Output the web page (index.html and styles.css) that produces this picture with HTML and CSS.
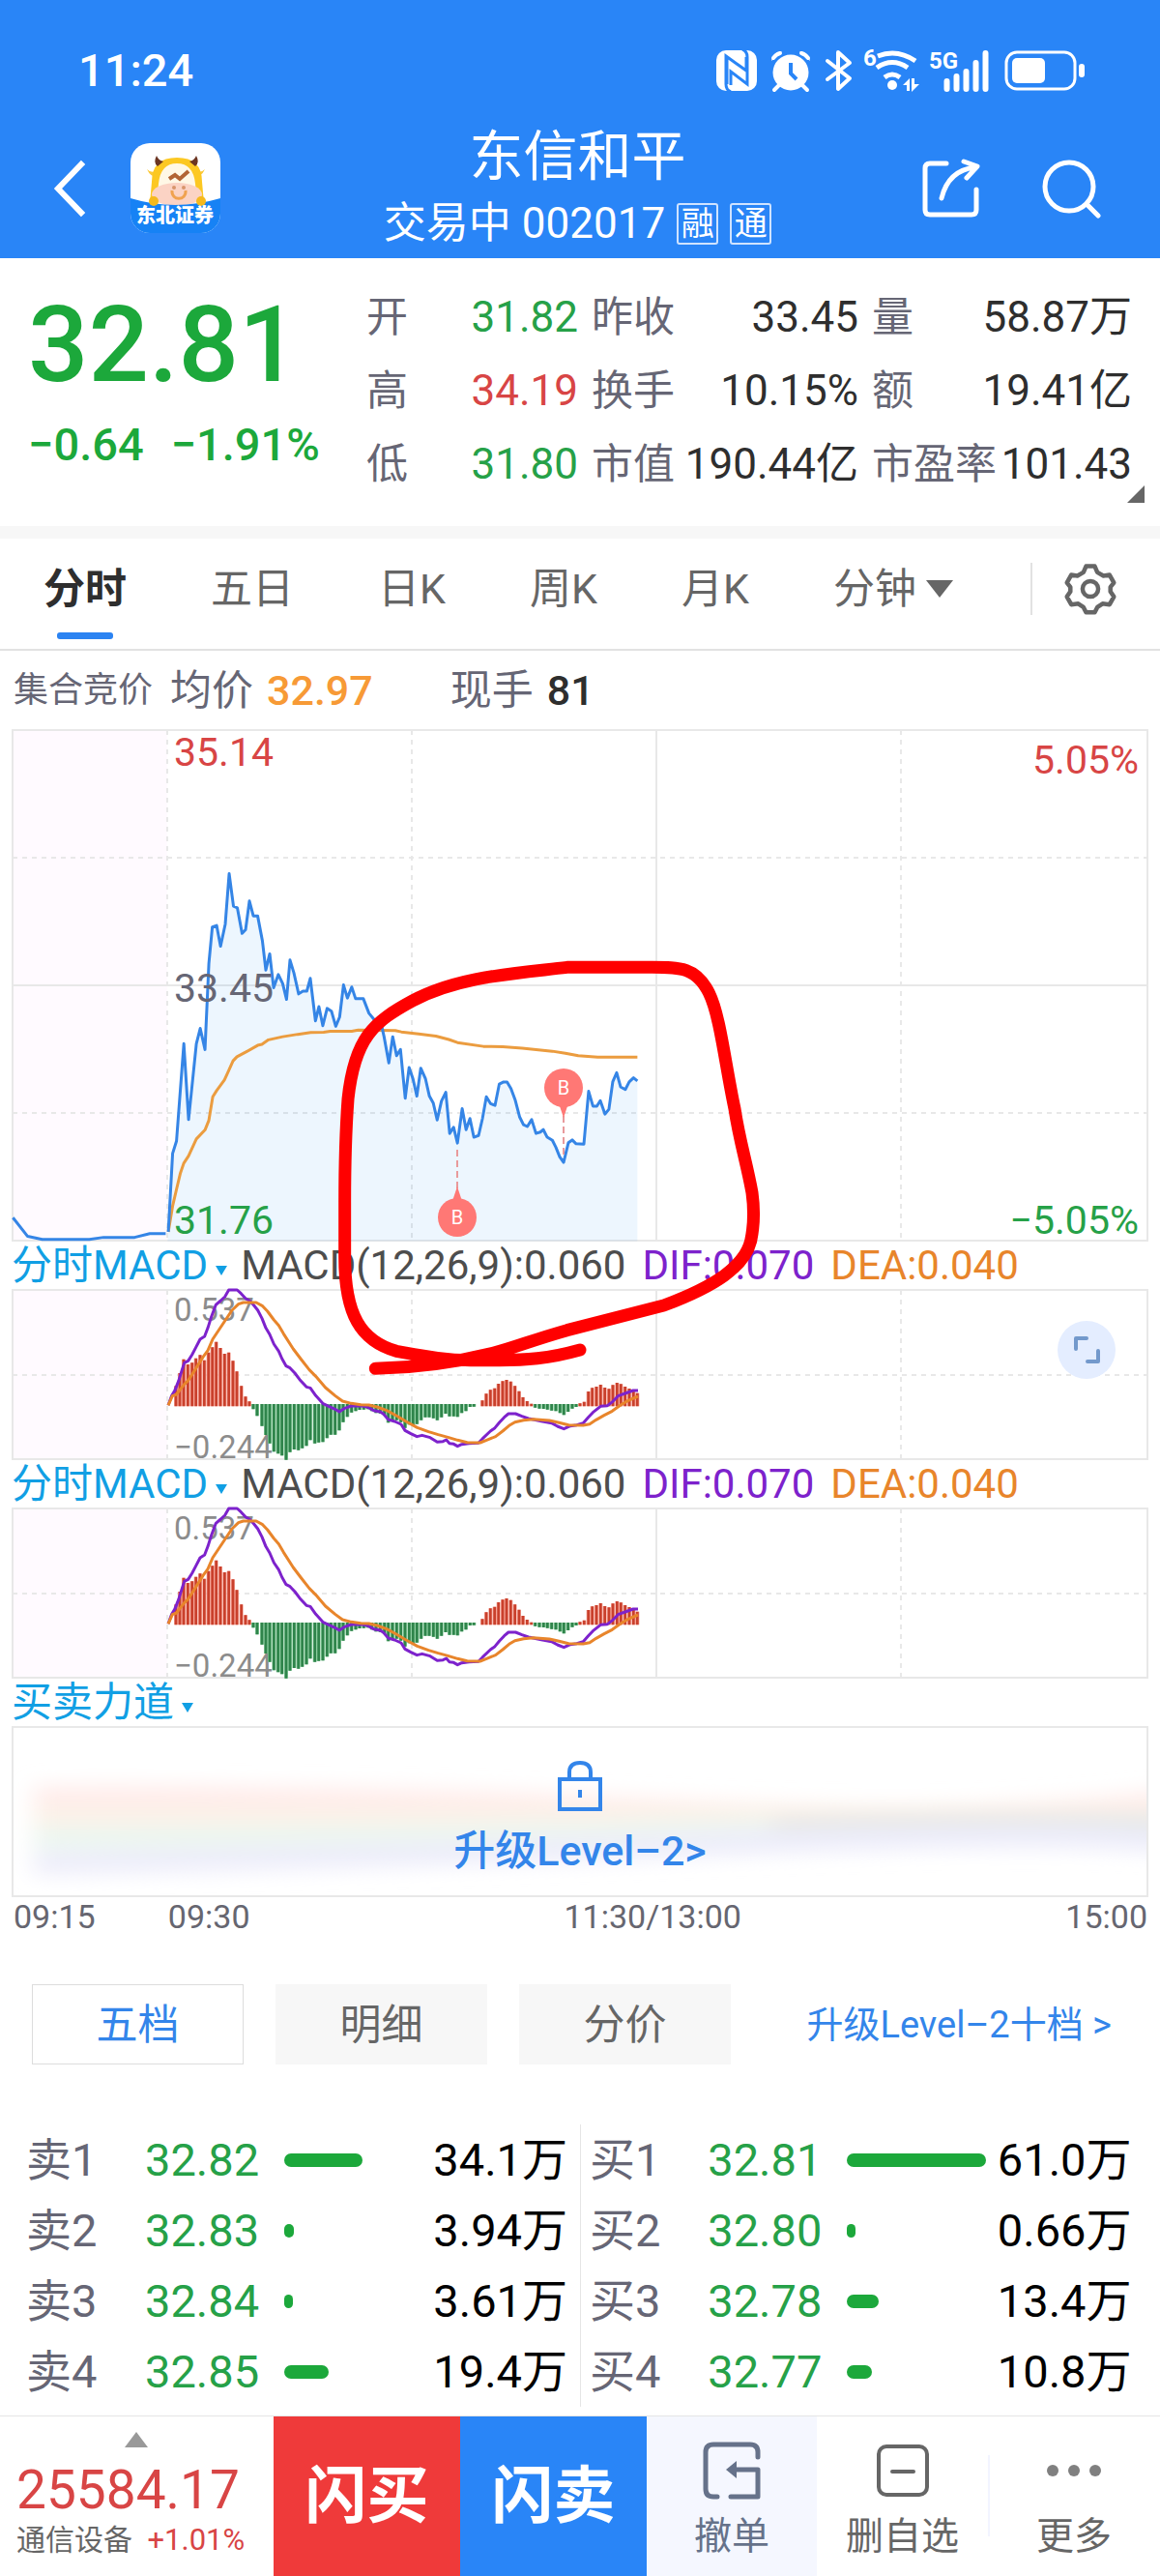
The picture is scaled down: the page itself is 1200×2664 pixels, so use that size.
FILE: index.html
```html
<!DOCTYPE html>
<html lang="zh-CN">
<head>
<meta charset="utf-8">
<meta name="viewport" content="width=device-width, initial-scale=1">
<title>东信和平 002017</title>
<link rel="stylesheet" href="styles.css">
</head>
<body>
<header class="top">
  <div class="status">
    <span>11:24</span>
    <svg class="status-icons" viewBox="0 0 384 46" aria-hidden="true">
      <rect x="0" y="2" width="42" height="42" rx="10" fill="#fff"/>
      <path d="M15 45Q10 43 10 37V8l21 15V9M11 37V10M27 1q5 2 5 8v28L15 24v14" fill="none" stroke="#2985f7" stroke-width="3"/>
      <g fill="#fff">
        <circle cx="77" cy="25" r="18.500"/>
        <path d="M57 13q1-9 11-10zM97 13q-1-9-11-10z"/>
        <path d="M65 38l-5 5M89 38l5 5M59 10q3-4 7-5M95 10q-3-4-7-5" stroke="#fff" stroke-width="4" stroke-linecap="round"/>
      </g>
      <path d="M77 15v11l6 6" fill="none" stroke="#2985f7" stroke-width="4"/>
      <path d="M115 13l23 18-12 11V4l12 11-23 17" fill="none" stroke="#fff" stroke-width="4" stroke-linejoin="round" stroke-linecap="round"/>
      <text x="152" y="18" class="mini">6</text>
      <g fill="none" stroke="#fff" stroke-width="5">
        <path d="M167 8q20-8 39 5M166 20q16-11 32 0M174 30q8-6 16 0"/>
      </g>
      <circle cx="182" cy="38" r="5" fill="#fff"/>
      <path d="M193 38l7-7v13h-3v-6zM202 31h3v6h5l-8 8z" fill="#fff"/>
      <text x="220" y="21" class="mini">5G</text>
      <path d="M238.500 34v8M248.500 29v13M258.500 24v18M268.500 15v27M278.500 5v37" stroke="#fff" stroke-width="6" stroke-linecap="round"/>
      <rect x="300" y="4" width="71" height="38" rx="11" fill="none" stroke="#fff" stroke-width="3"/>
      <rect x="306" y="10" width="34" height="26" rx="5" fill="#fff"/>
      <rect x="375" y="16" width="6" height="14" rx="3" fill="#fff"/>
    </svg>
  </div>
  <div class="nav">
    <div class="nav-side">
      <button class="icon-btn back" aria-label="返回"><svg viewBox="0 0 36 60"><path d="M30 5L6 30l24 25" fill="none" stroke="#fff" stroke-width="6" stroke-linecap="square"/></svg></button>
      <svg class="logo" viewBox="0 0 93 93" role="img" aria-label="东北证券">
        <defs><clipPath id="logo-clip"><rect width="93" height="93" rx="20"/></clipPath></defs>
        <g clip-path="url(#logo-clip)">
          <rect width="93" height="93" fill="#fff"/>
          <path d="M17 27q5 5 11 1l1 7q-8 1-12-8zM77 27q-5 5-11 1l-1 7q8 1 12-8z" fill="#fbc93a"/>
          <path d="M22 40q0-25 26-25t26 25l2 22H20z" fill="#fcc822"/>
          <path d="M27 13q-4 7 1 11l6-5q-5-1-7-6zM68 13q4 7-1 11l-6-5q5-1 7-6z" fill="#6b3522"/>
          <path d="M29 42q2-21 19-21t19 21l2 20H27z" fill="#fff8e6"/>
          <ellipse cx="48" cy="53" rx="26" ry="12" fill="#fbd3c4"/>
          <path d="M40 37l6-4 5 4 9-8" fill="none" stroke="#b26434" stroke-width="4"/>
          <circle cx="45" cy="46" r="2" fill="#d9956b"/><circle cx="55" cy="46" r="2" fill="#d9956b"/>
          <path d="M43 49c-1 11 15 11 14 0" fill="none" stroke="#f0a24f" stroke-width="3"/>
          <path d="M0 57q46 14 93 0v36H0z" fill="#1682f5"/>
          <circle cx="24" cy="60" r="5" fill="#f5b91e"/><circle cx="73" cy="60" r="5" fill="#f5b91e"/>
          <text x="46" y="82" text-anchor="middle" class="logo-text">东北证券</text>
        </g>
      </svg>
    </div>
    <div class="nav-title">
      <h1>东信和平</h1>
      <p>交易中 002017<span class="tag">融</span><span class="tag">通</span></p>
    </div>
    <div class="nav-side nav-right">
      <button class="icon-btn share" aria-label="分享"><svg viewBox="0 0 62 62"><g fill="none" stroke="#fff" stroke-width="5" stroke-linecap="round" stroke-linejoin="round"><path d="M26 5H9q-5 0-5 5v43q0 5 5 5h43q5 0 5-5V32"/><path d="M21 41Q28 12 56 9M44 3l14 5-11 12"/></g></svg></button>
      <button class="icon-btn search" aria-label="搜索"><svg viewBox="0 0 64 62"><g fill="none" stroke="#fff" stroke-width="5" stroke-linecap="round"><circle cx="29" cy="29" r="25"/><path d="M47 47l12 12"/></g></svg></button>
    </div>
  </div>
</header>

<main>
  <section class="quote">
    <div class="quote-price">
      <strong>32.81</strong>
      <p><span>−0.64</span><span>−1.91%</span></p>
    </div>
    <dl class="stats">
      <div><dt>开</dt><dd class="down">31.82</dd></div>
      <div><dt>昨收</dt><dd>33.45</dd></div>
      <div><dt>量</dt><dd>58.87万</dd></div>
      <div><dt>高</dt><dd class="up">34.19</dd></div>
      <div><dt>换手</dt><dd>10.15%</dd></div>
      <div><dt>额</dt><dd>19.41亿</dd></div>
      <div><dt>低</dt><dd class="down">31.80</dd></div>
      <div><dt>市值</dt><dd>190.44亿</dd></div>
      <div><dt>市盈率</dt><dd>101.43</dd></div>
    </dl>
    <svg class="corner" viewBox="0 0 18 18" aria-hidden="true"><path d="M18 0v18H0z" fill="#666"/></svg>
  </section>

  <nav class="periods">
    <button class="active">分时</button>
    <button>五日</button>
    <button>日K</button>
    <button>周K</button>
    <button>月K</button>
    <button class="more-periods">分钟<svg viewBox="0 0 28 18" aria-hidden="true"><path d="M0 0h28L14 18z" fill="#666"/></svg></button>
    <button class="settings" aria-label="设置"><svg viewBox="0 0 60 60"><g fill="none" stroke="#666" stroke-width="5" stroke-linejoin="round"><path d="M25 4h10l3 7 7 4 7-1 5 9-4 5v5l4 6-5 9-8-1-6 4-3 6H25l-3-6-6-4-8 1-5-9 4-6v-5l-4-5 5-9 7 1 7-4z"/><circle cx="30" cy="30" r="9"/></g></svg></button>
  </nav>

  <section class="charts">
    <div class="legend"><small>集合竞价</small><span class="avg-label">均价</span><b class="avg">32.97</b><span class="last-label">现手</span><b>81</b></div>

    <svg class="panel" viewBox="0 0 1200 530" role="img" aria-label="分时走势">
      <rect x="13" y="1" width="160" height="528" fill="#fffaff"/>
      <g class="frame"><rect x="13" y="1" width="1174" height="528"/></g>
      <g class="grid">
        <path d="M13 265h1174M679 1v528" class="solid"/>
        <path d="M13 133h1174M13 397h1174M173 1v528M426 1v528M932 1v528"/>
      </g>
      <g transform="translate(0 -14) scale(.44643 .35714)">
        <path class="area" d="M388 1522L390 1495 400 1268 409 1232 426 950 437 1170 455 950 464 906 475 967 484 718 492 612 502 608 511 668 522 604 531 458 541 552 550 557 561 631 569 620 578 537 587 580 597 580 608 652 616 737 625 690 634 788 645 750 655 776 664 822 672 708 681 745 692 806 702 798 711 798 719 761 731 884 739 843 748 898 758 848 768 856 778 900 787 873 796 780 805 818 815 786 824 820 842 820 855 862 870 885 880 874 890 930 901 1006 910 930 919 985 928 967 939 1108 948 1019 957 1052 966 1102 975 1021 986 1052 995 1102 1004 1122 1013 1171 1023 1116 1033 1091 1042 1210 1051 1192 1060 1238 1071 1138 1080 1199 1089 1167 1098 1221 1109 1216 1118 1167 1127 1104 1137 1124 1147 1129 1157 1067 1167 1061 1175 1061 1184 1080 1194 1114 1204 1162 1213 1185 1222 1190 1232 1170 1242 1210 1252 1206 1259 1199 1268 1221 1280 1230 1288 1250 1297 1278 1306 1294 1317 1237 1326 1229 1335 1240 1353 1241 1364 1088 1374 1131 1383 1131 1391 1115 1402 1154 1411 1140 1420 1060 1429 1034 1438 1075 1449 1083 1458 1061 1468 1049 1477 1058V1522z"/>
        <path class="line avg-line" d="M390 1495L400 1420 409 1372 418 1325 426 1296 437 1275 455 1226 475 1200 484 1172 493 1104 502 1086 520 1055 530 1028 540 1000 549 988 570 974 597 955 607 952 622 939 655 930 690 923 720 918 750 917 765 914 815 914 830 911 916 912 930 916 970 922 1010 928 1040 938 1060 947 1120 958 1165 959 1210 963 1280 972 1310 978 1340 985 1385 989H1477"/>
        <path class="line price-line" d="M30 1454L64 1508 98 1517H207L240 1511H312L347 1500H384"/>
        <path class="line price-line" d="M390 1495L400 1268 409 1232 426 950 437 1170 455 950 464 906 475 967 484 718 492 612 502 608 511 668 522 604 531 458 541 552 550 557 561 631 569 620 578 537 587 580 597 580 608 652 616 737 625 690 634 788 645 750 655 776 664 822 672 708 681 745 692 806 702 798 711 798 719 761 731 884 739 843 748 898 758 848 768 856 778 900 787 873 796 780 805 818 815 786 824 820 842 820 855 862 870 885 880 874 890 930 901 1006 910 930 919 985 928 967 939 1108 948 1019 957 1052 966 1102 975 1021 986 1052 995 1102 1004 1122 1013 1171 1023 1116 1033 1091 1042 1210 1051 1192 1060 1238 1071 1138 1080 1199 1089 1167 1098 1221 1109 1216 1118 1167 1127 1104 1137 1124 1147 1129 1157 1067 1167 1061 1175 1061 1184 1080 1194 1114 1204 1162 1213 1185 1222 1190 1232 1170 1242 1210 1252 1206 1259 1199 1268 1221 1280 1230 1288 1250 1297 1278 1306 1294 1317 1237 1326 1229 1335 1240 1353 1241 1364 1088 1374 1131 1383 1131 1391 1115 1402 1154 1411 1140 1420 1060 1429 1034 1438 1075 1449 1083 1458 1061 1468 1049 1477 1058"/>
      </g>
      <g class="marker">
        <path class="stem" d="M473 435v40M583 440v-42"/>
        <path d="M473 473l5 15h-10zM583 402l5-15h-10z"/>
        <circle cx="473" cy="505" r="20"/><circle cx="583" cy="371" r="20"/>
        <text x="473" y="512">B</text><text x="583" y="378">B</text>
      </g>
      <g class="scale">
        <text x="180" y="38" class="up">35.14</text>
        <text x="180" y="282">33.45</text>
        <text x="180" y="522" class="down">31.76</text>
        <text x="1178" y="46" class="up end">5.05%</text>
        <text x="1178" y="522" class="down end">−5.05%</text>
      </g>
    </svg>

    <div class="legend indicator"><button>分时MACD<i></i></button><span>MACD(12,26,9):0.060</span><span class="dif">DIF:0.070</span><span class="dea">DEA:0.040</span></div>
    <div class="panel-wrap">
      <svg class="panel" viewBox="0 0 1200 177" role="img" aria-label="MACD">
        <defs>
          <path id="bars-up" d="M66 403V340M78 403V300M90 403V257M103 403V273M116 403V268M128 403V254M141 403V244M154 403V260M167 403V236M179 403V220M191 403V203M204 403V222M217 403V240M230 403V236M243 403V262M255 403V295M269 403V340M282 403V373M294 403V388M1017 403V385M1029 403V364M1042 403V352M1055 403V347M1067 403V333M1080 403V325M1092 403V321M1105 403V326M1118 403V340M1131 403V356M1143 403V375M1156 403V387M1169 403V395M1320 403V394M1333 403V389M1346 403V357M1358 403V346M1371 403V342M1384 403V336M1397 403V345M1410 403V349M1422 403V337M1435 403V330M1447 403V334M1460 403V342M1473 403V348M1486 403V354M1498 403V362"/>
          <path id="bars-down" d="M306 396V412M318 396V433M333 396V464M345 396V492M357 396V518M370 396V544M383 396V550M395 396V556M408 396V569M420 396V545M433 396V537M446 396V539M458 396V533M471 396V526M483 396V508M497 396V518M509 396V515M522 396V514M535 396V502M547 396V491M560 396V491M573 396V478M585 396V452M598 396V436M611 396V422M624 396V418M636 396V414M649 396V413M662 396V412M674 396V418M687 396V424M700 396V425M713 396V430M725 396V454M738 396V448M751 396V446M764 396V452M777 396V470M790 396V460M802 396V462M814 396V458M827 396V446M840 396V437M852 396V437M865 396V440M877 396V446M890 396V437M903 396V426M915 396V434M928 396V434M940 396V436M953 396V424M966 396V418M979 396V405M991 396V404M1181 396V407M1194 396V410M1207 396V411M1219 396V413M1232 396V416M1245 396V418M1258 396V424M1270 396V430M1283 396V420M1296 396V410M1308 396V405"/>
          <g id="macd-grid">
            <rect x="13" y="1" width="160" height="175" fill="#fffaff"/>
            <g class="frame"><rect x="13" y="1" width="1174" height="175"/></g>
            <g class="grid"><path d="M679 1v175" class="solid"/><path d="M13 89h1174M173 1v175M426 1v175M932 1v175"/></g>
          </g>
          <g id="macd-plot" transform="translate(160 -13) scale(.33333)" fill="none">
            <use href="#bars-up" stroke="#f6a497" stroke-width="12"/>
            <use href="#bars-up" stroke="#c9402c" stroke-width="8"/>
            <use href="#bars-down" stroke="#8bcc9e" stroke-width="12"/>
            <use href="#bars-down" stroke="#2f844b" stroke-width="8"/>
            <path stroke="#7d22cc" stroke-width="9" stroke-linejoin="round" d="M42 400L53 370 62 355 74 325 85 290 92 268 104 262 116 243 128 220 141 195 155 186 165 160 176 125 190 88 205 75 218 63 230 42H256L268 53 282 68 295 76 308 90 320 105 333 130 345 160 357 180 370 210 385 232 395 255 408 278 420 284 435 300 450 320 471 343 483 346 500 370 523 395 540 403 560 412 573 420 590 409 610 402 640 401 660 405 680 416 700 420 710 427 725 444 745 450 765 459 777 478 795 488 814 497 830 493 855 500 877 514 895 512 905 507 915 518 928 520 940 527 953 521 975 518 1005 517 1018 503 1042 480 1056 470 1070 453 1085 437 1098 426 1120 426 1140 434 1160 441 1200 449 1232 455 1250 465 1270 473 1290 464 1310 461 1330 455 1345 438 1360 422 1384 403 1405 401 1422 388 1438 371 1460 363 1485 354 1500 354"/>
            <path stroke="#e8852b" stroke-width="9" stroke-linejoin="round" d="M42 400L55 371 68 366 80 350 92 335 104 323 120 298 150 250 165 230 180 195 200 165 220 135 240 105 260 86 275 81H315L335 92 350 108 370 135 385 152 400 178 430 225 455 258 480 290 500 310 530 345 560 370 583 387 610 394 640 398 665 399 690 405 720 416 750 432 780 450 815 469 850 482 880 491 910 499 940 508 970 515 1010 516 1030 508 1058 497 1080 480 1100 463 1118 452 1145 446 1175 443 1225 447 1255 454 1285 461 1330 462 1350 458 1370 445 1395 431 1420 418 1445 400 1470 385 1500 372"/>
          </g>
        </defs>
        <use href="#macd-grid"/>
        <g class="scale small"><text x="180" y="33">0.537</text><text x="180" y="175">−0.244</text></g>
        <use href="#macd-plot"/>
      </svg>
      <button class="expand" aria-label="全屏"><svg viewBox="0 0 60 60"><path d="M19 29V18h11M31 42h11V31" fill="none" stroke="#7399cc" stroke-width="4" stroke-linecap="round" stroke-linejoin="round"/></svg></button>
    </div>

    <div class="legend indicator"><button>分时MACD<i></i></button><span>MACD(12,26,9):0.060</span><span class="dif">DIF:0.070</span><span class="dea">DEA:0.040</span></div>
    <svg class="panel" viewBox="0 0 1200 177" role="img" aria-label="MACD">
      <use href="#macd-grid"/>
      <g class="scale small"><text x="180" y="33">0.537</text><text x="180" y="175">−0.244</text></g>
      <use href="#macd-plot"/>
    </svg>

    <div class="legend indicator"><button>买卖力道<i></i></button></div>
    <div class="panel-wrap">
      <svg class="panel" viewBox="0 0 1200 177" aria-hidden="true">
        <defs>
          <filter id="haze" x="-10%" y="-60%" width="120%" height="220%"><feGaussianBlur stdDeviation="12 10"/></filter>
          <clipPath id="haze-clip"><rect x="14" y="2" width="1172" height="173"/></clipPath>
        </defs>
        <g clip-path="url(#haze-clip)"><g filter="url(#haze)" fill="none" stroke-width="24">
          <path d="M35 74Q400 72 700 88T1210 78" stroke="#ffecea"/>
          <path d="M35 95Q400 96 750 96T1210 96" stroke="#fbf2e8"/>
          <path d="M35 116Q400 116 750 108T1210 104" stroke="#ecf6f0"/>
          <path d="M800 108Q1000 100 1210 106" stroke="#e2e5e4"/>
          <path d="M35 142Q400 136 750 122T1210 120" stroke="#ededfa"/>
        </g></g>
        <g class="frame"><rect x="13" y="1" width="1174" height="175"/></g>
      </svg>
      <a class="upgrade" href="#level2">
        <svg viewBox="0 0 48 54" aria-hidden="true"><g fill="none" stroke="#3385ea" stroke-width="4"><rect x="3" y="20" width="42" height="31"/><path d="M13 20v-7q0-10 11-10t11 10v7M24 31v8"/></g></svg>
        升级Level–2&gt;
      </a>
    </div>
    <div class="axis"><span>09:15</span><span>09:30</span><span>11:30/13:00</span><span>15:00</span></div>

    <svg class="scribble" viewBox="0 0 1200 760" aria-hidden="true">
      <path transform="translate(340 287) scale(.33333)" d="M780 1308C680 1336 610 1340 530 1340H440C360 1340 300 1328 210 1312C100 1280 50 1200 50 1020V850C50 750 52 640 60 530C80 340 140 290 260 225C400 150 570 141 740 121H1000C1090 121 1140 120 1180 200C1215 270 1230 420 1260 560C1275 660 1298 730 1314 820Q1325 900 1310 970C1290 1050 1200 1110 1040 1170L740 1247C630 1278 580 1300 510 1318C400 1345 280 1364 145 1366"/>
    </svg>
  </section>

  <nav class="book-tabs">
    <button class="active">五档</button>
    <button>明细</button>
    <button>分价</button>
    <a href="#level2">升级Level–2十档 &gt;</a>
  </nav>

  <section class="book">
    <table>
      <tr><th>卖1</th><td class="down">32.82</td><td><i style="width:56%"></i></td><td>34.1万</td></tr>
      <tr><th>卖2</th><td class="down">32.83</td><td><i style="width:7%"></i></td><td>3.94万</td></tr>
      <tr><th>卖3</th><td class="down">32.84</td><td><i style="width:6%"></i></td><td>3.61万</td></tr>
      <tr><th>卖4</th><td class="down">32.85</td><td><i style="width:32%"></i></td><td>19.4万</td></tr>
    </table>
    <table>
      <tr><th>买1</th><td class="down">32.81</td><td><i style="width:100%"></i></td><td>61.0万</td></tr>
      <tr><th>买2</th><td class="down">32.80</td><td><i style="width:6%"></i></td><td>0.66万</td></tr>
      <tr><th>买3</th><td class="down">32.78</td><td><i style="width:23%"></i></td><td>13.4万</td></tr>
      <tr><th>买4</th><td class="down">32.77</td><td><i style="width:18%"></i></td><td>10.8万</td></tr>
    </table>
  </section>
</main>

<footer class="actions">
  <div class="sector">
    <svg viewBox="0 0 24 16" aria-hidden="true"><path d="M12 0l12 16H0z" fill="#999"/></svg>
    <strong>25584.17</strong>
    <p>通信设备 <span>+1.01%</span></p>
  </div>
  <button class="trade buy">闪买</button>
  <button class="trade sell">闪卖</button>
  <button class="tool cancel">
    <svg viewBox="0 0 60 60"><g fill="none" stroke="#66728a" stroke-width="5" stroke-linecap="round" stroke-linejoin="round"><path d="M57 16v-5q0-8-8-8H11q-8 0-8 8v38q0 8 8 8h4"/><path d="M33 29h24v28H29"/></g><path d="M24 29l11-9v18z" fill="#66728a"/></svg>
    撤单</button>
  <button class="tool">
    <svg viewBox="0 0 60 60"><g fill="none" stroke="#666" stroke-width="4" stroke-linecap="round"><rect x="5" y="5" width="50" height="50" rx="8"/><path d="M19 31h22"/></g></svg>
    删自选</button>
  <button class="tool last">
    <svg viewBox="0 0 60 60"><g fill="#808080"><circle cx="8" cy="30" r="6"/><circle cx="30" cy="30" r="6"/><circle cx="52" cy="30" r="6"/></g></svg>
    更多</button>
</footer>
</body>
</html>
```
FILE: styles.css
```css
* { box-sizing: border-box; }

body {
  margin: 0;
  background: #fff;
  color: #2e2e2e;
  font: 43px/56px Roboto, "Noto Sans CJK SC", sans-serif;
}

h1, p, dl, dd { margin: 0; }
button { margin: 0; padding: 0; border: 0; background: none; color: inherit; font: inherit; }
a { text-decoration: none; }
svg { display: block; }
.up { color: #d84545; fill: #d84545; }
.down { color: #26a148; fill: #26a148; }

/* header */
.top { background: #2985f7; color: #fff; }
.status {
  display: flex;
  justify-content: space-between;
  align-items: center;
  padding: 45px 75px 0 81px;
  font-size: 47px;
  font-weight: 500;
  line-height: 55px;
}
.status-icons { width: 384px; height: 46px; overflow: visible; }
.mini { fill: #fff; font-size: 24px; font-weight: 700; }
.nav {
  display: grid;
  grid-template-columns: 1fr auto 1fr;
  align-items: center;
  padding: 30px 59px 8px 54px;
}
.nav-side { display: flex; align-items: center; gap: 45px; }
.nav-right { justify-content: flex-end; gap: 62px; }
.icon-btn svg { height: 62px; }
.back svg { height: 60px; }
.logo { width: 93px; height: 93px; }
.logo-text { font-size: 20px; font-weight: 900; fill: #fff; }
.nav-title { text-align: center; }
.nav-title h1 { font-size: 56px; font-weight: 400; line-height: 64px; }
.nav-title p { display: flex; align-items: center; justify-content: center; gap: 12px; margin-top: 9px; font-size: 44px; }
.tag {
  width: 43px;
  border: 2px solid #cfe3ff;
  border-radius: 3px;
  font-size: 34px;
  line-height: 39px;
}

/* quote */
.quote { position: relative; display: flex; padding: 23px 29px 26px; }
.quote-price { flex: 0 0 350px; padding-top: 12px; color: #1ca83b; }
.quote-price strong { display: block; font-size: 110px; font-weight: 500; line-height: 110px; }
.quote-price p { display: flex; gap: 28px; margin-top: 20px; font-size: 47px; font-weight: 500; }
.stats { flex: 1; display: grid; grid-template-columns: 219fr 276fr 269fr; column-gap: 14px; }
.stats div { display: flex; justify-content: space-between; line-height: 76px; white-space: nowrap; }
.stats dt { color: #666675; }
.stats dd { font-size: 44px; }
.corner { position: absolute; right: 16px; bottom: 24px; width: 18px; }

/* period tabs */
.periods {
  display: flex;
  align-items: flex-start;
  height: 129px;
  padding: 0 42px 0 45px;
  border-top: 13px solid #f7f7f7;
  border-bottom: 2px solid #e2e2e2;
  color: #666;
}
.periods button { margin-right: 87px; white-space: nowrap; line-height: 104px; }
.periods .active { position: relative; color: #2e2e2e; font-weight: 700; }
.periods .active::after {
  content: "";
  position: absolute;
  left: 14px;
  right: 14px;
  bottom: 0;
  height: 7px;
  border-radius: 3px;
  background: #2b83f2;
}
.periods .more-periods { display: flex; align-items: center; gap: 10px; margin-right: 0; }
.more-periods svg { width: 28px; }
.periods .settings { margin: 25px 0 0 auto; padding-left: 30px; border-left: 2px solid #e2e2e2; }
.settings svg { width: 60px; height: 54px; }

/* charts */
.charts { position: relative; }
.legend { display: flex; align-items: center; height: 81px; padding: 0 14px; color: #666675; white-space: nowrap; }
.legend small { font-size: 36px; }
.legend b { color: #2e2e2e; font-weight: 500; }
.legend .avg { color: #f79a36; }
.avg-label { margin: 0 14px 0 18px; }
.last-label { margin: 0 14px 0 80px; }
.indicator { height: 49px; gap: 17px; padding-left: 12px; font-size: 42px; line-height: 49px; color: #4d4d4d; }
.indicator button { display: flex; align-items: center; gap: 8px; margin-right: -3px; color: #119fe4; }
.indicator i { margin-top: 10px; border: 6px solid transparent; border-top: 10px solid #119fe4; border-bottom: 0; }
.dif { color: #7d22cc; }
.dea { color: #e8852b; }
.panel { width: 100%; height: auto; overflow: visible; }
.panel-wrap { position: relative; }
.frame { fill: none; stroke: #e8e8e8; stroke-width: 2; }
.grid { fill: none; stroke: #e8e8e8; stroke-width: 2; stroke-dasharray: 5 5; }
.grid .solid { stroke-dasharray: none; }
.area { fill: #1e88f5; fill-opacity: .08; }
.line { fill: none; stroke-width: 3; stroke-linejoin: round; vector-effect: non-scaling-stroke; }
.price-line { stroke: #3585e6; }
.avg-line { stroke: #eb9c3f; }
.marker { fill: #ff7875; }
.marker text { fill: #fff; font-size: 20px; text-anchor: middle; }
.marker .stem { stroke: #e89a9c; stroke-width: 2; stroke-dasharray: 7 4; }
.scale { fill: #666675; font-size: 41px; }
.scale.small { fill: #8c8c8c; font-size: 33px; }
.scale .end { text-anchor: end; }
.expand { position: absolute; top: 33px; right: 46px; width: 60px; height: 60px; border-radius: 50%; background: #e4edff; }
.upgrade {
  position: absolute;
  inset: 0;
  display: flex;
  flex-direction: column;
  align-items: center;
  gap: 12px;
  padding-top: 35px;
  color: #3385ea;
  font-weight: 500;
}
.upgrade svg { width: 48px; }
.axis {
  display: grid;
  grid-template-columns: 160fr 410fr 302fr 302fr;
  padding: 0 13px 0 14px;
  color: #666670;
  font-size: 34px;
  line-height: 40px;
}
.axis span:last-child { text-align: right; }
.scribble { position: absolute; top: 0; left: 0; width: 100%; pointer-events: none; }
.scribble path { fill: none; stroke: #f00; stroke-width: 39; stroke-linecap: round; stroke-linejoin: round; }

/* order book */
.book-tabs { display: flex; align-items: center; gap: 33px; padding: 50px 50px 62px 33px; color: #666; }
.book-tabs button { flex: 0 1 219px; height: 83px; background: #f7f7f7; }
.book-tabs .active { border: 1px solid #ddd; background: #fff; color: #3385ea; }
.book-tabs a { margin-left: auto; color: #3385ea; font-size: 38px; white-space: nowrap; }
.book { display: grid; grid-template-columns: 1fr 1fr; padding-bottom: 9px; }
.book table {
  width: 100%;
  table-layout: fixed;
  border-collapse: collapse;
  color: #000;
  font-size: 47px;
  line-height: 73px;
}
.book tr { height: 73px; }
.book th, .book td { padding: 0; font-weight: 400; text-align: left; white-space: nowrap; }
.book th { width: 25%; padding-left: 27px; color: #666675; }
.book th + td { width: 24%; }
.book td:nth-child(3) { width: 24%; }
.book td:last-child { padding-right: 13px; text-align: right; }
.book table + table { border-left: 1px solid #e5e5e5; }
.book table + table th { width: 22%; padding-left: 9px; }
.book table + table td:last-child { padding-right: 29px; }
.book i { display: block; min-width: 8px; height: 14px; border-radius: 7px; background: #1ca83b; }

/* bottom bar */
.actions {
  display: grid;
  grid-template-columns: 283fr 193fr 193fr 176fr 177fr 178fr;
  height: 166px;
  border-top: 1px solid #e5e5e5;
  color: #666;
}
.sector { padding: 16px 0 0 17px; font-size: 30px; line-height: 40px; white-space: nowrap; }
.sector svg { width: 24px; margin-left: 112px; }
.sector strong { display: block; margin-top: 12px; color: #d84545; font-size: 55px; font-weight: 400; line-height: 64px; }
.sector span { margin-left: 8px; color: #d84545; font-size: 31px; }
.trade { color: #fff; font-size: 64px; font-weight: 700; }
.buy { background: #ef3a3a; }
.sell { background: #2985f7; }
.tool { display: flex; flex-direction: column; align-items: center; gap: 14px; padding-top: 26px; font-size: 39px; line-height: 48px; white-space: nowrap; }
.tool svg { width: 60px; }
.cancel { background: #f5f7ff; color: #66728a; }
.last { background: linear-gradient(#f2f4ff, #f2f4ff) left 40px / 2px 84px no-repeat; }
```
